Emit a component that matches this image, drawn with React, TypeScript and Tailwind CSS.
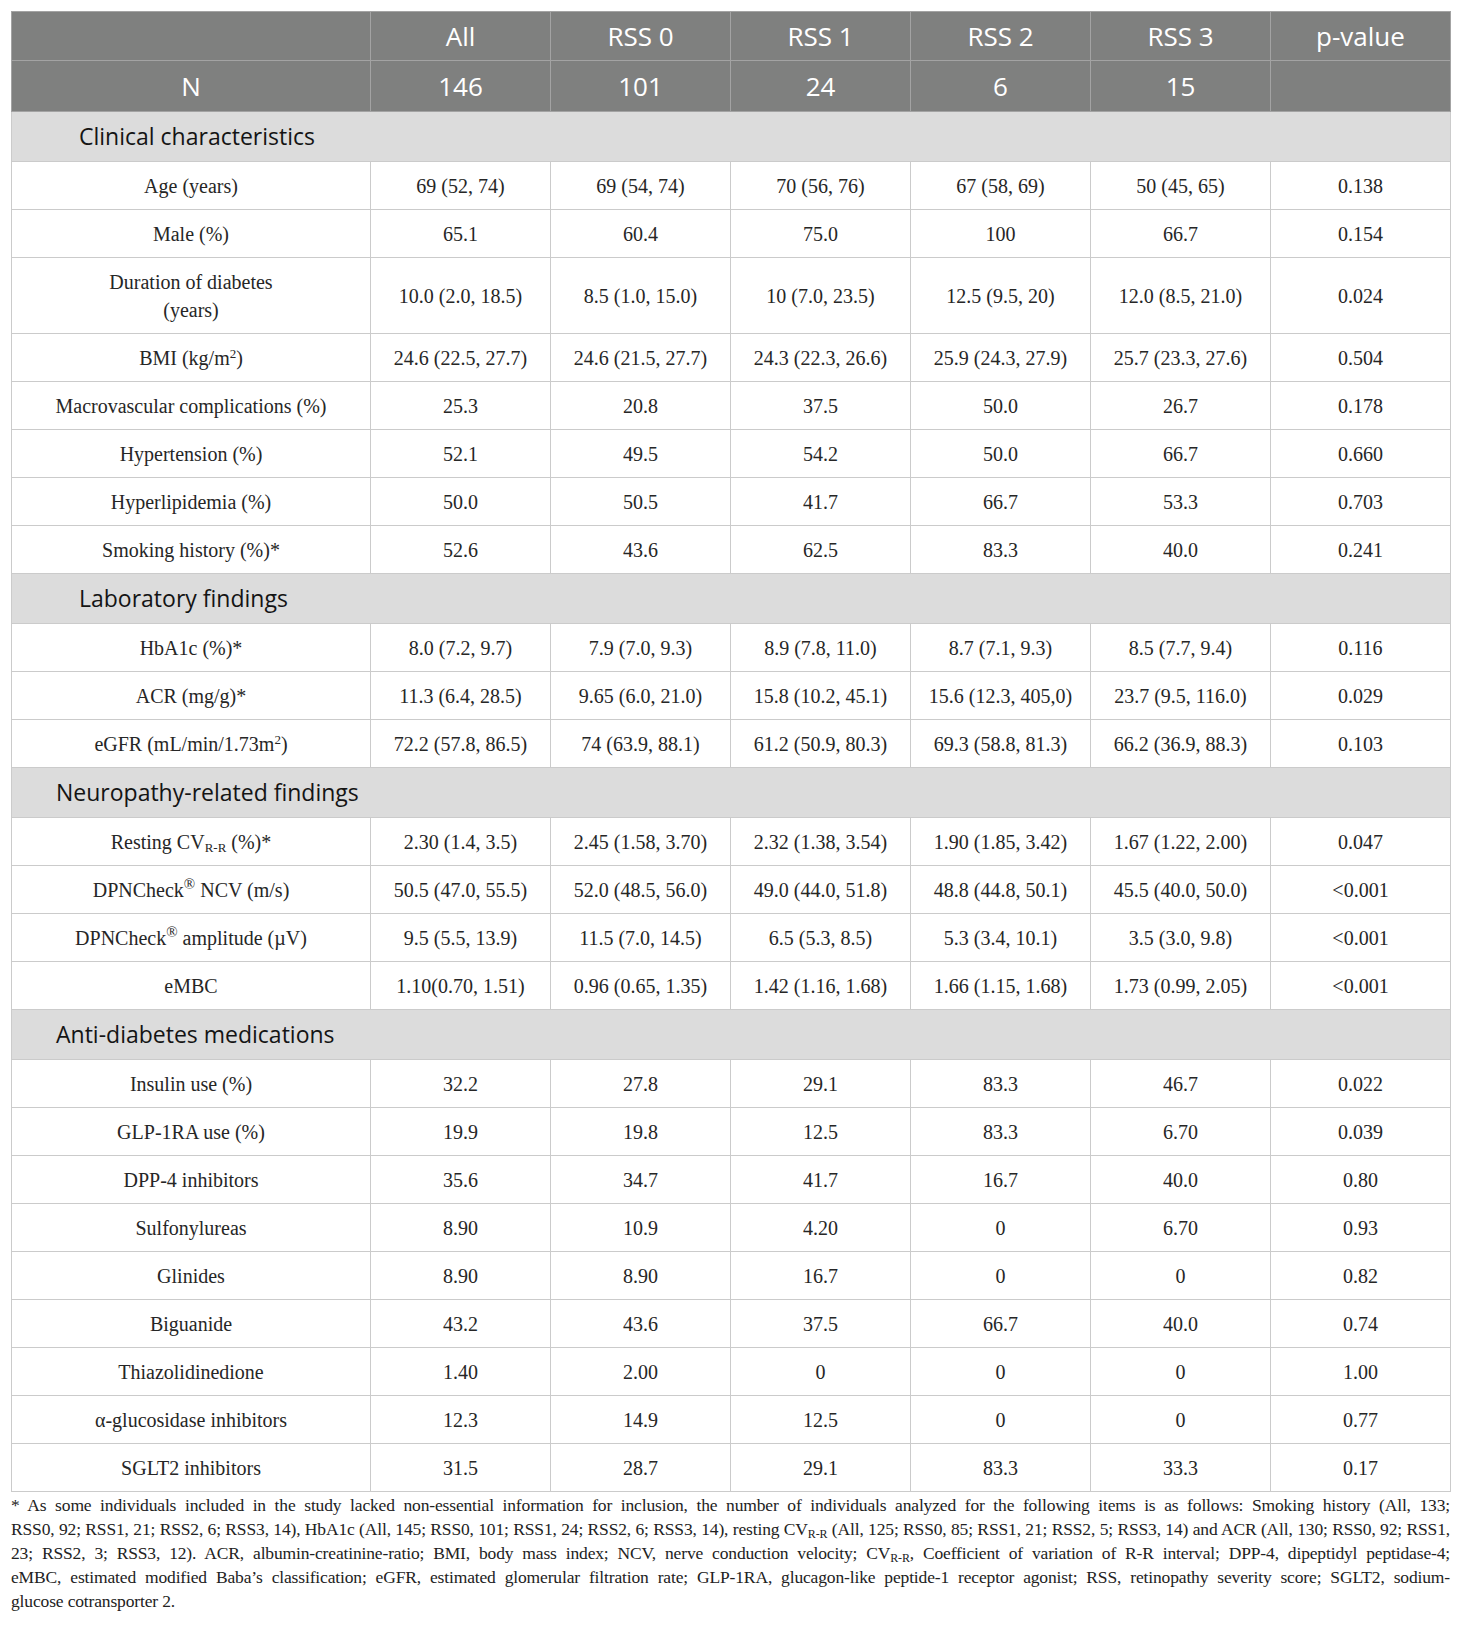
import React from 'react';

// Row data for the characteristics table
type Row = {
	label: React.ReactNode;
	values: string[];
	tall?: boolean;
};

type Section = {
	title: string;
	indent: string;
	rows: Row[];
};

const CvRR = () => (
	<>
		CV<sub className="text-[13px]">R-R</sub>
	</>
);

const sections: Section[] = [
	{
		title: 'Clinical characteristics',
		indent: 'pl-[67px]',
		rows: [
			{ label: 'Age (years)', values: ['69 (52, 74)', '69 (54, 74)', '70 (56, 76)', '67 (58, 69)', '50 (45, 65)', '0.138'] },
			{ label: 'Male (%)', values: ['65.1', '60.4', '75.0', '100', '66.7', '0.154'] },
			{
				label: (
					<>
						Duration of diabetes
						<br />
						(years)
					</>
				),
				values: ['10.0 (2.0, 18.5)', '8.5 (1.0, 15.0)', '10 (7.0, 23.5)', '12.5 (9.5, 20)', '12.0 (8.5, 21.0)', '0.024'],
				tall: true,
			},
			{
				label: (
					<>
						BMI (kg/m<sup className="text-[13px]">2</sup>)
					</>
				),
				values: ['24.6 (22.5, 27.7)', '24.6 (21.5, 27.7)', '24.3 (22.3, 26.6)', '25.9 (24.3, 27.9)', '25.7 (23.3, 27.6)', '0.504'],
			},
			{ label: 'Macrovascular complications (%)', values: ['25.3', '20.8', '37.5', '50.0', '26.7', '0.178'] },
			{ label: 'Hypertension (%)', values: ['52.1', '49.5', '54.2', '50.0', '66.7', '0.660'] },
			{ label: 'Hyperlipidemia (%)', values: ['50.0', '50.5', '41.7', '66.7', '53.3', '0.703'] },
			{ label: 'Smoking history (%)*', values: ['52.6', '43.6', '62.5', '83.3', '40.0', '0.241'] },
		],
	},
	{
		title: 'Laboratory findings',
		indent: 'pl-[67px]',
		rows: [
			{ label: 'HbA1c (%)*', values: ['8.0 (7.2, 9.7)', '7.9 (7.0, 9.3)', '8.9 (7.8, 11.0)', '8.7 (7.1, 9.3)', '8.5 (7.7, 9.4)', '0.116'] },
			{ label: 'ACR (mg/g)*', values: ['11.3 (6.4, 28.5)', '9.65 (6.0, 21.0)', '15.8 (10.2, 45.1)', '15.6 (12.3, 405,0)', '23.7 (9.5, 116.0)', '0.029'] },
			{
				label: (
					<>
						eGFR (mL/min/1.73m<sup className="text-[13px]">2</sup>)
					</>
				),
				values: ['72.2 (57.8, 86.5)', '74 (63.9, 88.1)', '61.2 (50.9, 80.3)', '69.3 (58.8, 81.3)', '66.2 (36.9, 88.3)', '0.103'],
			},
		],
	},
	{
		title: 'Neuropathy-related findings',
		indent: 'pl-[44px]',
		rows: [
			{
				label: (
					<>
						Resting <CvRR /> (%)*
					</>
				),
				values: ['2.30 (1.4, 3.5)', '2.45 (1.58, 3.70)', '2.32 (1.38, 3.54)', '1.90 (1.85, 3.42)', '1.67 (1.22, 2.00)', '0.047'],
			},
			{
				label: (
					<>
						DPNCheck<sup className="text-[15px]">®</sup> NCV (m/s)
					</>
				),
				values: ['50.5 (47.0, 55.5)', '52.0 (48.5, 56.0)', '49.0 (44.0, 51.8)', '48.8 (44.8, 50.1)', '45.5 (40.0, 50.0)', '<0.001'],
			},
			{
				label: (
					<>
						DPNCheck<sup className="text-[15px]">®</sup> amplitude (µV)
					</>
				),
				values: ['9.5 (5.5, 13.9)', '11.5 (7.0, 14.5)', '6.5 (5.3, 8.5)', '5.3 (3.4, 10.1)', '3.5 (3.0, 9.8)', '<0.001'],
			},
			{ label: 'eMBC', values: ['1.10(0.70, 1.51)', '0.96 (0.65, 1.35)', '1.42 (1.16, 1.68)', '1.66 (1.15, 1.68)', '1.73 (0.99, 2.05)', '<0.001'] },
		],
	},
	{
		title: 'Anti-diabetes medications',
		indent: 'pl-[44px]',
		rows: [
			{ label: 'Insulin use (%)', values: ['32.2', '27.8', '29.1', '83.3', '46.7', '0.022'] },
			{ label: 'GLP-1RA use (%)', values: ['19.9', '19.8', '12.5', '83.3', '6.70', '0.039'] },
			{ label: 'DPP-4 inhibitors', values: ['35.6', '34.7', '41.7', '16.7', '40.0', '0.80'] },
			{ label: 'Sulfonylureas', values: ['8.90', '10.9', '4.20', '0', '6.70', '0.93'] },
			{ label: 'Glinides', values: ['8.90', '8.90', '16.7', '0', '0', '0.82'] },
			{ label: 'Biguanide', values: ['43.2', '43.6', '37.5', '66.7', '40.0', '0.74'] },
			{ label: 'Thiazolidinedione', values: ['1.40', '2.00', '0', '0', '0', '1.00'] },
			{ label: 'α-glucosidase inhibitors', values: ['12.3', '14.9', '12.5', '0', '0', '0.77'] },
			{ label: 'SGLT2 inhibitors', values: ['31.5', '28.7', '29.1', '83.3', '33.3', '0.17'] },
		],
	},
];

const headerCols = ['All', 'RSS 0', 'RSS 1', 'RSS 2', 'RSS 3', 'p-value'];
const nCols = ['146', '101', '24', '6', '15', ''];

const headCell = 'border border-[#a3a3a3] text-center align-middle font-normal';
const dataCell = 'border border-[#cbcbcb] text-center align-middle';

function HeaderRows() {
	return (
		<thead className="bg-[#7f807f] text-white font-['Open_Sans',sans-serif] text-[26px]">
			<tr className="h-[49px]">
				<th className={headCell} />
				{headerCols.map((h) => (
					<th key={h} className={headCell}>
						{h}
					</th>
				))}
			</tr>
			<tr className="h-[51px]">
				<th className={headCell}>N</th>
				{nCols.map((n, i) => (
					<th key={i} className={headCell}>
						{n}
					</th>
				))}
			</tr>
		</thead>
	);
}

function SectionBlock({ section }: { section: Section }) {
	return (
		<>
			<tr className="h-[50px] bg-[#dcdcdc]">
				<td
					colSpan={7}
					className={`border border-[#cbcbcb] align-middle text-left font-['Open_Sans',sans-serif] text-[23px] text-[#141414] ${section.indent}`}
				>
					{section.title}
				</td>
			</tr>
			{section.rows.map((row, i) => (
				<tr key={i} className={row.tall ? 'h-[76px]' : 'h-[48px]'}>
					<td className={`${dataCell} leading-[28px]`}>{row.label}</td>
					{row.values.map((v, j) => (
						<td key={j} className={dataCell}>
							{v}
						</td>
					))}
				</tr>
			))}
		</>
	);
}

// Footnote lines are fixed so the breaks match the printed table
const justified = 'whitespace-nowrap text-justify [text-align-last:justify]';

function Footnote() {
	return (
		<div className="mt-[1px] w-[1439px] font-['Liberation_Serif',serif] text-[17.5px] leading-[24px] tracking-[-0.15px] text-[#222]">
			<div className={justified}>
				* As some individuals included in the study lacked non-essential information for inclusion, the number of individuals analyzed for the following items is as follows: Smoking history (All, 133;
			</div>
			<div className={justified}>
				RSS0, 92; RSS1, 21; RSS2, 6; RSS3, 14), HbA1c (All, 145; RSS0, 101; RSS1, 24; RSS2, 6; RSS3, 14), resting CV
				<sub className="text-[12px]">R-R</sub> (All, 125; RSS0, 85; RSS1, 21; RSS2, 5; RSS3, 14) and ACR (All, 130; RSS0, 92; RSS1,
			</div>
			<div className={justified}>
				23; RSS2, 3; RSS3, 12). ACR, albumin-creatinine-ratio; BMI, body mass index; NCV, nerve conduction velocity; CV
				<sub className="text-[12px]">R-R</sub>, Coefficient of variation of R-R interval; DPP-4, dipeptidyl peptidase-4;
			</div>
			<div className={justified}>
				eMBC, estimated modified Baba’s classification; eGFR, estimated glomerular filtration rate; GLP-1RA, glucagon-like peptide-1 receptor agonist; RSS, retinopathy severity score; SGLT2, sodium-
			</div>
			<div>glucose cotransporter 2.</div>
		</div>
	);
}

export default function App() {
	return (
		<div className="min-h-[1631px] w-[1460px] bg-white pl-[11px] pt-[11px]">
			<table className="w-[1439px] table-fixed border-collapse border border-[#bdbdbd] font-['Liberation_Serif',serif] text-[20px] text-[#262626]">
				<colgroup>
					<col className="w-[359px]" />
					<col className="w-[180px]" />
					<col className="w-[180px]" />
					<col className="w-[180px]" />
					<col className="w-[180px]" />
					<col className="w-[180px]" />
					<col className="w-[180px]" />
				</colgroup>
				<HeaderRows />
				<tbody>
					{sections.map((s) => (
						<SectionBlock key={s.title} section={s} />
					))}
				</tbody>
			</table>
			<Footnote />
		</div>
	);
}
